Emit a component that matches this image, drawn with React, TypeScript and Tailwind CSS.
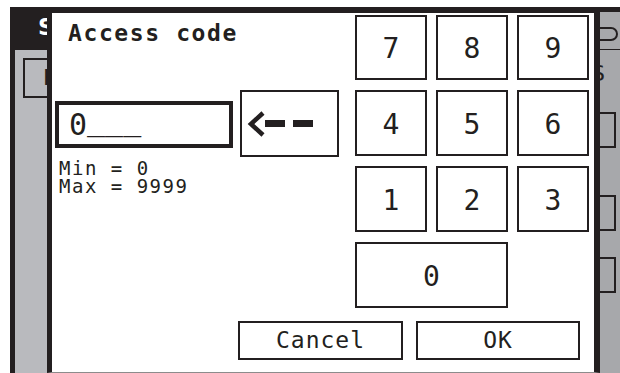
const ink = 'border-[#231f20]'
const mono = "font-['DejaVu_Sans_Mono',monospace] text-[#231f20]"

function Background() {
  return (
    <div className="h-full pt-[7px] pl-[10px]">
      <div className="flex h-full flex-col border-t-[5px] border-l-[5px] border-[#231f20]">
        <div className="flex h-[38px]">
          <div className="flex-1 bg-[#231f20] pl-[23px] pt-[1px] font-['DejaVu_Sans',sans-serif] text-[23px] font-bold leading-[28px] text-white">
            S
          </div>
          <div className="w-[20px] border-b border-[#231f20] bg-[#a7a8ab] pt-[15px]">
            <div className="h-[14px] w-[18px] rounded-r-[8px] border-2 border-l-0 border-[#231f20]" />
          </div>
        </div>
        <div className="flex flex-1">
          <div className="flex-1 bg-[#b9babe] pl-[8px] pt-[8px]">
            <div className={`h-[40px] w-[40px] border-2 ${ink} pl-[18px] pt-[6px] font-['DejaVu_Sans',sans-serif] text-[22px] leading-[24px] text-[#231f20]`}>
              H
            </div>
          </div>
          <div className="flex w-[20px] flex-col bg-[#a7a8ab]">
            <div className="mt-[13px] -ml-[9px] font-['DejaVu_Sans',sans-serif] text-[22px] leading-[22px] text-[#231f20]">
              S
            </div>
            <div className={`mt-[27px] h-[36px] w-[16px] border-2 border-l-0 ${ink}`} />
            <div className={`mt-[47px] h-[36px] w-[16px] border-2 border-l-0 ${ink}`} />
            <div className={`mt-[26px] h-[36px] w-[16px] border-2 border-l-0 ${ink}`} />
          </div>
        </div>
      </div>
    </div>
  )
}

function Key({ label, wide }: { label: string; wide?: boolean }) {
  return (
    <button
      className={`flex items-center justify-center border-2 ${ink} bg-white pt-[3px] text-[28px] leading-none ${wide ? 'col-span-2' : ''}`}
    >
      {label}
    </button>
  )
}

function AccessDialog() {
  return (
    <div
      className={`absolute left-[47px] top-[7px] flex h-[366px] w-[553px] flex-col border-t-[6px] border-r-[6px] border-b border-l-[5px] ${ink} border-b-[#8c8c8c] bg-white ${mono}`}
    >
      <div className="flex">
        <div className="w-[303px]">
          <h1 className="ml-[16px] mt-[7px] text-[23px] font-bold leading-[26px] tracking-[1.6px]">
            Access code
          </h1>
          <div className="mt-[44px] flex items-start">
            <div className={`ml-[3px] mt-[11px] flex h-[47px] w-[178px] items-center border-[4px] ${ink} pl-[10px] text-[30px] leading-none`}>
              0<span className="relative -top-[5px]">___</span>
            </div>
            <button className={`ml-[7px] h-[67px] w-[99px] border-2 ${ink}`}>
              <svg width="95" height="63" viewBox="0 0 95 63">
                <polyline points="21,21 9,32 21,43" fill="none" stroke="#231f20" strokeWidth="4.5" />
                <rect x="23" y="28" width="20" height="7" fill="#231f20" />
                <rect x="51" y="28" width="20" height="7" fill="#231f20" />
              </svg>
            </button>
          </div>
          <div className="ml-[7px] mt-[2px] text-[19px] leading-[18px] tracking-[1.5px]">
            <div>Min = 0</div>
            <div>Max = 9999</div>
          </div>
        </div>
        <div className="mt-[2px] grid grid-cols-[72px_72px_72px] grid-rows-[65px_66px_66px_66px] gap-x-[9px] gap-y-[10px]">
          {['7', '8', '9', '4', '5', '6', '1', '2', '3'].map((d) => (
            <Key key={d} label={d} />
          ))}
          <Key label="0" wide />
        </div>
      </div>
      <div className="ml-[186px] mt-[13px] flex gap-[13px] text-[23px] leading-none tracking-[1px]">
        <button className={`h-[39px] w-[165px] border-2 ${ink}`}>Cancel</button>
        <button className={`h-[39px] w-[164px] border-2 ${ink}`}>OK</button>
      </div>
    </div>
  )
}

export default function App() {
  return (
    <div className="relative h-[373px] w-[620px] overflow-hidden bg-white">
      <Background />
      <AccessDialog />
    </div>
  )
}
